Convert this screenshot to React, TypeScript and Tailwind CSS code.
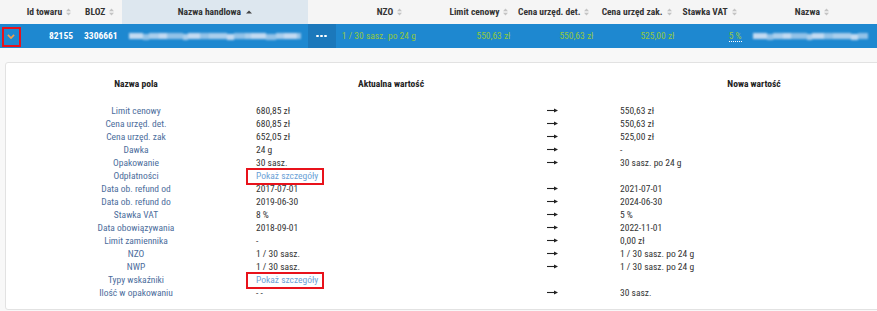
import React from "react";

const FONT = "font-['Liberation_Sans_Narrow','Roboto_Condensed','DejaVu_Sans_Condensed',sans-serif]";

function SortIcon() {
  return (
    <svg width="5" height="8" viewBox="0 0 5 8" className="ml-[4px] shrink-0">
      <path d="M0 3.2 L2.5 0.5 L5 3.2 Z" fill="#c4c4c4" />
      <path d="M0 4.8 L2.5 7.5 L5 4.8 Z" fill="#c4c4c4" />
    </svg>
  );
}

function SortUp() {
  return (
    <svg width="6" height="4" viewBox="0 0 6 4" className="ml-[5px] shrink-0">
      <path d="M0 3.5 L3 0.5 L6 3.5 Z" fill="#444" />
    </svg>
  );
}

function Arrow() {
  return (
    <svg width="11" height="5" viewBox="0 0 11 5">
      <path d="M0 2.5 H8" stroke="#222" strokeWidth="1.1" />
      <path d="M7 0.6 L11 2.5 L7 4.4 Z" fill="#222" />
    </svg>
  );
}

function Blur({ w }: { w: number }) {
  const segs = [14, 6, 10, 8, 16, 5, 12, 9, 18, 7, 11, 6, 15, 10, 8, 13, 6, 12, 9, 14, 7];
  let total = 0;
  const out: React.ReactNode[] = [];
  segs.forEach((s, i) => {
    if (total >= w) return;
    const width = Math.min(s, w - total);
    total += width;
    out.push(
      <div
        key={i}
        className="h-[6px] bg-[#dfe9f7]"
        style={{ width, opacity: i % 3 === 0 ? 0.85 : i % 3 === 1 ? 0.6 : 0.72, marginTop: i % 4 === 1 ? 2 : 0 }}
      />
    );
  });
  return <div className="flex items-center blur-[1.3px]" style={{ width: w }}>{out}</div>;
}

type Row = { label: string; cur: string; next?: string; link?: boolean; noArrow?: boolean };

const rows: Row[] = [
  { label: "Limit cenowy", cur: "680,85 zł", next: "550,63 zł" },
  { label: "Cena urzęd. det.", cur: "680,85 zł", next: "550,63 zł" },
  { label: "Cena urzęd. zak", cur: "652,05 zł", next: "525,00 zł" },
  { label: "Dawka", cur: "24 g", next: "-" },
  { label: "Opakowanie", cur: "30 sasz.", next: "30 sasz. po 24 g" },
  { label: "Odpłatności", cur: "Pokaż szczegóły", link: true, noArrow: true },
  { label: "Data ob. refund od", cur: "2017-07-01", next: "2021-07-01" },
  { label: "Data ob. refund do", cur: "2019-06-30", next: "2024-06-30" },
  { label: "Stawka VAT", cur: "8 %", next: "5 %" },
  { label: "Data obowiązywania", cur: "2018-09-01", next: "2022-11-01" },
  { label: "Limit zamiennika", cur: "-", next: "0,00 zł" },
  { label: "NZO", cur: "1 / 30 sasz.", next: "1 / 30 sasz. po 24 g" },
  { label: "NWP", cur: "1 / 30 sasz.", next: "1 / 30 sasz. po 24 g" },
  { label: "Typy wskaźniki", cur: "Pokaż szczegóły", link: true, noArrow: true },
  { label: "Ilość w opakowaniu", cur: "- -", next: "30 sasz." },
];

export default function App() {
  return (
    <div className={`w-[877px] h-[311px] overflow-hidden bg-[#f8f8f8] ${FONT} text-[9.5px]`}>
      {/* header */}
      <div className="flex h-[24px] bg-[#f5f5f5] font-bold text-[#333] items-stretch">
        <div className="w-[24px]" />
        <div className="w-[56px] flex items-center justify-end pr-[8px]">Id towaru<SortIcon /></div>
        <div className="w-[43px] flex items-center pl-[6px]">BLOZ<SortIcon /></div>
        <div className="w-[189px] flex items-center justify-center bg-[#dde7ef]">Nazwa handlowa<SortUp /></div>
        <div className="w-[28px]" />
        <div className="w-[109px] flex items-center justify-center">NZO<SortIcon /></div>
        <div className="w-[73px] flex items-center justify-end pr-[7px]">Limit cenowy<SortIcon /></div>
        <div className="w-[84px] flex items-center justify-end pr-[9px]">Cena urzęd. det.<SortIcon /></div>
        <div className="w-[82px] flex items-center justify-end pr-[8px]">Cena urzęd zak.<SortIcon /></div>
        <div className="w-[68px] flex items-center justify-end pr-[10px]">Stawka VAT<SortIcon /></div>
        <div className="w-[132px] flex items-center justify-center">Nazwa<SortIcon /></div>
      </div>
      {/* selected row */}
      <div className="flex h-[24px] bg-[#1e88d0] items-stretch">
        <div className="w-[24px] relative flex items-center justify-center">
          <svg width="8" height="5" viewBox="0 0 8 5" className="ml-[-1px]">
            <path d="M0.9 0.9 L4 4 L7.1 0.9" stroke="#f5a04a" strokeWidth="1.7" fill="none" />
          </svg>
          <div className="absolute left-[2px] top-[3px] w-[19px] h-[20px] border-2 border-[#e8121b]" />
        </div>
        <div className="w-[56px] flex items-center justify-end pr-[6px] font-bold text-white">82155</div>
        <div className="w-[43px] flex items-center pl-[5px] font-bold text-white">3306661</div>
        <div className="w-[189px] flex items-center pl-[7px]"><Blur w={172} /></div>
        <div className="w-[28px] flex items-center justify-center bg-[#1b78bb]">
          <div className="flex gap-[1px]">
            <div className="w-[3px] h-[2.5px] bg-white rounded-[1px]" />
            <div className="w-[3px] h-[2.5px] bg-white rounded-[1px]" />
            <div className="w-[3px] h-[2.5px] bg-white rounded-[1px]" />
          </div>
        </div>
        <div className="w-[109px] flex items-center pl-[6px] text-[#93c840]">1 / 30 sasz. po 24 g</div>
        <div className="w-[73px] flex items-center justify-end pr-[5px] text-[#93c840]">550,63 zł</div>
        <div className="w-[84px] flex items-center justify-end pr-[5px] text-[#93c840]">550,63 zł</div>
        <div className="w-[82px] flex items-center justify-end pr-[5px] text-[#93c840]">525,00 zł</div>
        <div className="w-[68px] flex items-center justify-end pr-[5px] text-[#93c840]">
          <span className="border-b border-dotted border-white leading-[11px]">5 %</span>
        </div>
        <div className="w-[132px] flex items-center pl-[6px]"><Blur w={115} /></div>
      </div>
      {/* detail panel */}
      <div className="mt-[14px] ml-[5px] w-[900px] h-[248px] bg-white border border-[#e2e2e2] rounded-[3px] pt-[14px] pl-[10px]">
        <div className="flex h-[13px] leading-[13px] font-bold text-[#222]">
          <div className="w-[240px] text-center">Nazwa pola</div>
          <div className="w-[270px] text-center">Aktualna wartość</div>
          <div className="w-[94px]" />
          <div className="w-[268px] text-center">Nowa wartość</div>
        </div>
        <div className="mt-[14px] flex flex-col">
          {rows.map((r, i) => (
            <div key={i} className="flex h-[13px] leading-[13px]">
              <div className="w-[240px] text-center text-[#4c6d9c]">{r.label}</div>
              <div className="w-[270px] text-[#333] relative">
                {r.link ? (
                  <span className="relative text-[#6b9fd6]">
                    {r.cur}
                    <span className="absolute left-[-10px] top-[-2px] w-[78px] h-[17px] border-2 border-[#e8121b]" />
                  </span>
                ) : (
                  r.cur
                )}
              </div>
              <div className="w-[94px] flex items-center pl-[21px]">{!r.noArrow && <Arrow />}</div>
              <div className="w-[268px] text-[#333]">{r.next ?? ""}</div>
            </div>
          ))}
        </div>
      </div>
    </div>
  );
}
